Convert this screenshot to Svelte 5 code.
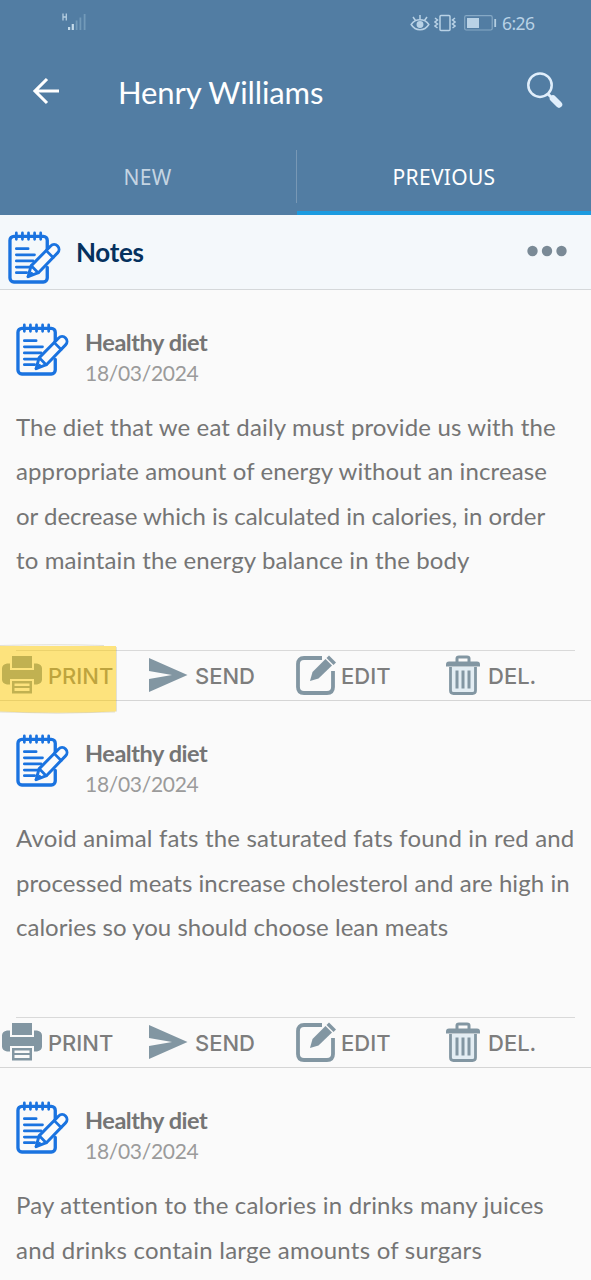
<script>
  // each line carries its own tracking, in px
  const notes = [
    {
      title: 'Healthy diet',
      date: '18/03/2024',
      lines: [
        ['The diet that we eat daily must provide us with the', 0.14],
        ['appropriate amount of energy without an increase', 0.12],
        ['or decrease which is calculated in calories, in order', -0.01],
        ['to maintain the energy balance in the body', 0.12]
      ],
      marked: true
    },
    {
      title: 'Healthy diet',
      date: '18/03/2024',
      lines: [
        ['Avoid animal fats the saturated fats found in red and', 0.16],
        ['processed meats increase cholesterol and are high in', 0.06],
        ['calories so you should choose lean meats', 0.02]
      ]
    },
    {
      title: 'Healthy diet',
      date: '18/03/2024',
      lines: [
        ['Pay attention to the calories in drinks many juices', 0.18],
        ['and drinks contain large amounts of surgars', 0.23]
      ]
    }
  ];
</script>

{#snippet noteIcon()}
  <svg class="note-icon" viewBox="0 0 54 54" fill="none" stroke="#1a73e0" stroke-width="3.4" stroke-linecap="round" stroke-linejoin="round">
    <path d="M40 24V9.5a4 4 0 0 0-4-4H6a4 4 0 0 0-4 4V48a4 4 0 0 0 4 4h30a4 4 0 0 0 4-4V37" />
    <path d="M8.5 2v6.5M14.7 2v6.5M20.9 2v6.5M27.1 2v6.5M33.3 2v6.5" stroke-width="2.8" />
    <path d="M8.5 18h12M8.5 24.3h18.5M8.5 30.5h17M8.5 36.7h13M8.5 42.5h10.5" stroke-width="2.8" />
    <path d="M20.5 46.5l3-11L43.5 15.3a4.8 4.8 0 0 1 7 7L31 42.5z" fill="#fafbfc" stroke-width="3" />
    <path d="M39 20l7 7M23.7 35.5l7 7M20.5 46.5l3.5-3.5" stroke-width="2.8" />
  </svg>
{/snippet}

<div class="screen">
  <header>
    <div class="status">
      <svg class="signal" width="26" height="20" viewBox="0 0 26 20">
        <path d="M2 1.5v7M5.300 1.500v7M2 5h3.300" fill="none" stroke="#b4cde0" stroke-width="1.300" />
        <path d="M7 15h2.200v3H7zM10.700 12h2.200v6h-2.200z" fill="#c5dbea" />
        <path d="M14.700 8.500h1.800V18h-1.800zM18.500 5.500h1.800V18h-1.800zM22.700 2h1.800v16h-1.800z" fill="#729ab9" />
      </svg>
      <div class="status-right">
        <svg width="20" height="18" viewBox="0 0 20 18" fill="none" stroke="#b9d2e6" stroke-width="1.500">
          <path d="M1.200 10.500C5.500 4.300 14.500 4.300 18.800 10.500C14.500 17.500 5.500 17.500 1.200 10.500z" />
          <circle cx="10" cy="10.500" r="2.700" fill="#b9d2e6" />
          <path d="M10 1v4M3 3l2.500 3.500M17 3l-2.500 3.500" />
        </svg>
        <svg class="vibrate" width="22" height="18" viewBox="0 0 22 18" fill="none" stroke="#b9d2e6" stroke-width="1.500">
          <rect x="6" y="1.500" width="10" height="15" rx="1" />
          <path d="M1 4l2.500 2L1 8l2.500 2L1 12l2.500 2M21 4l-2.500 2L21 8l-2.500 2 2.500 2-2.500 2" />
        </svg>
        <svg class="battery" width="33" height="16" viewBox="0 0 33 16">
          <rect x=".7" y=".7" width="27.500" height="14.300" rx="1.500" fill="none" stroke="#86a9c5" stroke-width="1.200" />
          <path d="M3 3h12v10H3z" fill="#b9d2e6" />
          <path d="M31.200 4v8" stroke="#b5cee1" stroke-width="1.800" />
        </svg>
        <span class="clock">6:26</span>
      </div>
    </div>
    <div class="title-bar">
      <svg width="28" height="28" viewBox="0 0 28 28" fill="none" stroke="#fff" stroke-width="3.100">
        <path d="M15 2L3 14l12 12M3 14h24" />
      </svg>
      <h1>Henry Williams</h1>
      <svg class="search" width="38" height="38" viewBox="0 0 38 38" fill="none" stroke="#e0eefb">
        <circle cx="14" cy="13.200" r="11.700" stroke-width="2.500" />
        <path d="M22 22l4 4" stroke-width="3" />
        <path d="M27 26.500l6 6" stroke-width="6.500" stroke-linecap="round" />
      </svg>
    </div>
    <nav>
      <div class="tab"><span>NEW</span></div>
      <div class="tab active"><span>PREVIOUS</span></div>
    </nav>
  </header>

  <section class="section-head">
    {@render noteIcon()}
    <h2>Notes</h2>
    <svg class="more" width="40" height="12" viewBox="0 0 40 12" fill="#7a8a96">
      <circle cx="5.500" cy="6" r="5.200" />
      <circle cx="20" cy="6" r="5.200" />
      <circle cx="34.500" cy="6" r="5.200" />
    </svg>
  </section>

  {#each notes as note}
    <article>
      <div class="note-head">
        {@render noteIcon()}
        <div class="meta">
          <h3>{note.title}</h3>
          <time>{note.date}</time>
        </div>
      </div>
      <div class="body">
        {#each note.lines as [text, tracking]}
          <p style="letter-spacing: {tracking}px">{text}</p>
        {/each}
      </div>
      <div class="actions">
        <div class="action print">
          <svg width="40" height="40" viewBox="0 0 40 40" fill="#8296a2">
            <path d="M10 1h20v12H10z" />
            <path d="M5 8.500h3V15h24V8.500h3q5 1 5 5v11q0 4-5 5h-3V24H8v5.500H5q-5-1-5-5v-11q0-4 5-5z" />
            <path d="M10 26h20v12.500H10zM12.500 28.500V31h15v-2.500zM12.500 33v3h15v-3z" fill-rule="evenodd" />
          </svg>
          <span>PRINT</span>
          {#if note.marked}
            <svg class="marker" width="118" height="72" viewBox="0 0 118 72">
              <path d="M0 2h116v65.500Q58 70 0 67.500z" fill="#ffcc00" fill-opacity=".5" />
              <path d="M0 1.500Q58 0 104 1.500M116.500 3v64.500M0 68Q58 70.500 115 68" fill="none" stroke="#8c8250" stroke-opacity=".22" />
            </svg>
          {/if}
        </div>
        <div class="action send">
          <svg width="40" height="40" viewBox="0 0 40 40" fill="#8296a2">
            <path d="M1 3L39.500 20 1 37V24l23-4L1 16z" />
          </svg>
          <span>SEND</span>
        </div>
        <div class="action edit">
          <svg width="40" height="40" viewBox="0 0 40 40" fill="none" stroke="#8296a2">
            <path d="M26 3H8Q2 3 2 9v23q0 6 6 6h23q6 0 6-6V16" stroke-width="3.800" />
            <path d="M14 26l2.500-9L29.500 4l6.500 6.500-13.500 13z" fill="#8296a2" stroke="none" />
            <path d="M30.500 3L33 .5l7 7L37.500 10z" fill="#8296a2" stroke="none" />
          </svg>
          <span>EDIT</span>
        </div>
        <div class="action del">
          <svg width="34" height="40" viewBox="0 0 34 40" fill="none" stroke="#8296a2">
            <path d="M4.500 12h25v26h-25z" fill="#e3edf3" stroke="none" />
            <path d="M11 7V3.500Q11 2 13 2h8q2 0 2 1.500V7" stroke-width="3" />
            <path d="M0 11.500V9.500q0-3 3-3h28q3 0 3 3v2z" fill="#8296a2" stroke="none" />
            <path d="M4.500 12v23.500q0 3 3 3h19q3 0 3-3V12" stroke-width="2.800" />
            <path d="M11 15.500v18M17 15.500v18M23 15.500v18" stroke-width="3" />
          </svg>
          <span>DEL.</span>
        </div>
      </div>
    </article>
  {/each}
</div>

<style>
  :global(body) {
    margin: 0;
    background: #fafafa;
  }
  .screen {
    width: 591px;
    height: 1280px;
    overflow: hidden;
    background: #fafafa;
    font-family: Lato, 'Open Sans', sans-serif;
    color: #757575;
  }
  h1, h2, h3, p {
    margin: 0;
  }
  svg {
    display: block;
    flex: none;
  }
  header {
    height: 215px;
    background: #527da3;
    color: #fff;
    display: flex;
    flex-direction: column;
  }
  .status {
    height: 46px;
    box-sizing: border-box;
    padding: 0 56px 0 61px;
    display: flex;
    justify-content: space-between;
    align-items: center;
  }
  .signal {
    margin-bottom: 2px;
  }
  .status-right {
    display: flex;
    align-items: center;
  }
  .vibrate {
    margin-left: 4px;
  }
  .battery {
    margin-left: 8px;
  }
  .clock {
    margin-left: 5px;
    width: 33px;
    font: 17.5px/20px 'Noto Sans', sans-serif;
    letter-spacing: -0.6px;
    color: #b9d2e6;
    white-space: nowrap;
  }
  .title-bar {
    height: 92px;
    padding: 0 27px 0 32px;
    display: flex;
    align-items: center;
  }
  h1 {
    flex: 1;
    margin-left: 58px;
    font-size: 31px;
    line-height: 40px;
    font-weight: 400;
    letter-spacing: -0.1px;
    white-space: nowrap;
  }
  .title-bar > svg:first-child {
    margin-bottom: 3px;
  }
  .search {
    margin-bottom: 3px;
  }
  nav {
    flex: 1;
    display: grid;
    grid-template-columns: 297px 1fr;
  }
  .tab {
    box-sizing: border-box;
    padding: 3px 2px 0 0;
    display: flex;
    align-items: center;
    justify-content: center;
    font: 21px/28px 'Noto Sans', sans-serif;
    letter-spacing: 0.3px;
    color: #c4d4e2;
    background: linear-gradient(#7898b5, #7898b5) right 12px / 1px 53px no-repeat;
  }
  .tab span {
    margin-bottom: 3px;
  }
  .tab.active {
    padding-right: 0;
    color: #fff;
    background: none;
    border-bottom: 4px solid #1c9be0;
  }
  .tab.active span {
    margin-bottom: -1px;
  }
  .section-head {
    height: 75px;
    box-sizing: border-box;
    padding: 0 24.5px 0 8px;
    display: flex;
    align-items: center;
    background: #f4f8fb;
    border-bottom: 1px solid #d5d8da;
  }
  .note-icon {
    width: 53px;
    height: 53px;
  }
  .section-head .note-icon {
    margin-top: 11px;
  }
  h2 {
    flex: 1;
    margin-left: 15px;
    color: #05315e;
    font-size: 26px;
    line-height: 32px;
    font-weight: 700;
    letter-spacing: -0.3px;
  }
  .more {
    margin-bottom: 2px;
  }
  article {
    border-bottom: 1px solid #d5d5d5;
  }
  .note-head {
    height: 82px;
    padding: 33px 16px 0;
    display: flex;
  }
  .meta {
    margin-left: 16px;
    padding-top: 3px;
  }
  h3 {
    font-size: 23.5px;
    line-height: 32px;
    font-weight: 700;
    letter-spacing: -0.45px;
    white-space: nowrap;
  }
  time {
    display: block;
    font-size: 21px;
    line-height: 30px;
    letter-spacing: -0.3px;
    color: #9b9b9b;
  }
  .body {
    padding: 0 16px 68px;
  }
  p {
    font-size: 24px;
    line-height: 44.33px;
    white-space: nowrap;
  }
  .actions {
    height: 50px;
    display: grid;
    grid-template-columns: 147px 147px 148px 1fr;
    background: linear-gradient(#d9d9d9, #d9d9d9) 16px 0 / 559px 1px no-repeat;
  }
  .action {
    position: relative;
    display: flex;
    align-items: center;
    gap: 6px;
    padding-left: 2px;
    font: 500 22px/30px Inter, sans-serif;
    color: #7d7d7d;
  }
  .send {
    padding-left: 1px;
    gap: 7px;
  }
  .edit {
    gap: 5px;
  }
  .del {
    padding-left: 4px;
    gap: 8px;
  }
  .action span {
    padding-top: 2px;
  }
  .marker {
    position: absolute;
    left: 0;
    top: -6px;
  }
</style>
